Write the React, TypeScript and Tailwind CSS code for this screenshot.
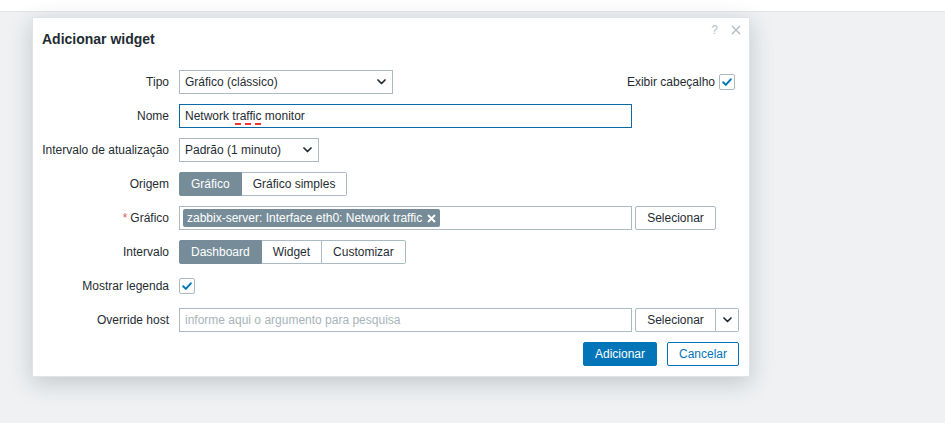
import React from "react";

const font = { fontFamily: '"Liberation Sans", Arial, sans-serif' };

function Chevron() {
  return (
    <svg width="9" height="6" viewBox="0 0 9 6" className="shrink-0">
      <path d="M1 1l3.5 3.5L8 1" fill="none" stroke="#1f2c33" strokeWidth="1.7" strokeLinecap="round" strokeLinejoin="round" />
    </svg>
  );
}

function Checkbox() {
  return (
    <span className="w-4 h-4 rounded-[2px] border border-[#acbbc2] bg-white flex items-center justify-center shrink-0">
      <svg width="12" height="12" viewBox="0 0 12 12">
        <path d="M2.2 6.3l2.6 2.6 5-5.6" fill="none" stroke="#0275b8" strokeWidth="2" strokeLinecap="round" strokeLinejoin="round" />
      </svg>
    </span>
  );
}

function Select({ value, width }: { value: string; width: string }) {
  return (
    <div className={`${width} h-6 border border-[#acbbc2] bg-white flex items-center justify-between pl-[5px] pr-[6px]`}>
      <span>{value}</span>
      <Chevron />
    </div>
  );
}

function Segmented({ items }: { items: string[] }) {
  return (
    <div className="flex h-6">
      {items.map((item, i) =>
        i === 0 ? (
          <span key={item} className="px-[11px] flex items-center bg-[#768d99] text-white border border-[#768d99] rounded-l-[2px]">
            {item}
          </span>
        ) : (
          <span
            key={item}
            className={`px-[11px] flex items-center bg-white border border-[#acbbc2] border-l-0 ${i === items.length - 1 ? "rounded-r-[2px]" : ""}`}
          >
            {item}
          </span>
        )
      )}
    </div>
  );
}

function Row({ label, required, children }: { label: string; required?: boolean; children: React.ReactNode }) {
  return (
    <div className="flex items-center h-6">
      <div className="w-[126px] shrink-0 flex justify-end whitespace-nowrap">
        {required && <span className="text-[#e45959] mr-[3px]">*</span>}
        <span>{label}</span>
      </div>
      <div className="ml-[10px] flex-1 flex items-center">{children}</div>
    </div>
  );
}

function SecondaryButton({ children, className = "" }: { children: React.ReactNode; className?: string }) {
  return (
    <span className={`h-6 px-[11px] flex items-center justify-center bg-white border border-[#acbbc2] rounded-[2px] ${className}`}>
      {children}
    </span>
  );
}

export default function App() {
  return (
    <div className="relative w-[945px] h-[423px] bg-[#eff1f3] overflow-hidden text-[12px] text-[#1f2c33]" style={font}>
      <div className="h-3 bg-white border-b border-[#e3e6e9]" />

      {/* Dialog overlay */}
      <div className="absolute left-[32px] top-[17px] w-[718px] h-[360px] bg-white border border-[#dfe4e7] shadow-[0_6px_22px_rgba(40,55,65,0.22)] px-[10px]">
        <div className="relative pt-[12px] h-[30px]">
          <h2 className="text-[14px] leading-[18px] font-bold text-[#1f2c33] -ml-[1px]">Adicionar widget</h2>
          <div className="absolute right-[-2px] top-[6px] flex items-center gap-[13px] text-[#b4c0c6]">
            <span className="text-[12px] leading-none">?</span>
            <svg width="10" height="10" viewBox="0 0 10 10">
              <path d="M1 1l8 8M9 1l-8 8" stroke="#b4c0c6" strokeWidth="1.5" />
            </svg>
          </div>
        </div>

        <div className="mt-[22px] flex flex-col gap-[10px]">
          <Row label="Tipo">
            <div className="flex-1 flex items-center justify-between">
              <Select value="Gráfico (clássico)" width="w-[214px]" />
              <div className="flex items-center gap-[4px] pr-[4px]">
                <span>Exibir cabeçalho</span>
                <Checkbox />
              </div>
            </div>
          </Row>

          <Row label="Nome">
            <div className="w-[453px] h-6 border border-[#0a6aa5] flex items-center px-[5px]">
              <span>
                Network t
                <span className="underline decoration-dashed decoration-[#e33] decoration-[1.5px] underline-offset-[3px]">raffic</span>{" "}
                monitor
              </span>
            </div>
          </Row>

          <Row label="Intervalo de atualização">
            <Select value="Padrão (1 minuto)" width="w-[140px]" />
          </Row>

          <Row label="Origem">
            <Segmented items={["Gráfico", "Gráfico simples"]} />
          </Row>

          <Row label="Gráfico" required>
            <div className="w-[453px] h-6 border border-[#acbbc2] flex items-center px-[3px]">
              <span className="h-[18px] px-[4px] rounded-[2px] bg-[#768d99] text-white flex items-center gap-[5px]">
                zabbix-server: Interface eth0: Network traffic
                <svg width="9" height="9" viewBox="0 0 9 9">
                  <path d="M1 1l7 7M8 1l-7 7" stroke="#ffffff" strokeWidth="1.9" />
                </svg>
              </span>
            </div>
            <SecondaryButton className="ml-[3px] w-[81px]">Selecionar</SecondaryButton>
          </Row>

          <Row label="Intervalo">
            <Segmented items={["Dashboard", "Widget", "Customizar"]} />
          </Row>

          <Row label="Mostrar legenda">
            <Checkbox />
          </Row>

          <Row label="Override host">
            <div className="w-[453px] h-6 border border-[#acbbc2] flex items-center px-[5px] text-[#a7b4ba]">
              informe aqui o argumento para pesquisa
            </div>
            <SecondaryButton className="ml-[3px] w-[81px] rounded-r-none">Selecionar</SecondaryButton>
            <span className="h-6 w-[23px] flex items-center justify-center bg-white border border-l-0 border-[#acbbc2] rounded-r-[2px]">
              <Chevron />
            </span>
          </Row>
        </div>

        <div className="mt-[10px] flex justify-end gap-[10px]">
          <span className="h-6 w-[74px] flex items-center justify-center bg-[#0275b8] border border-[#0275b8] text-white rounded-[2px]">Adicionar</span>
          <span className="h-6 w-[72px] flex items-center justify-center bg-white border border-[#0275b8] text-[#0275b8] rounded-[2px]">Cancelar</span>
        </div>
      </div>
    </div>
  );
}
